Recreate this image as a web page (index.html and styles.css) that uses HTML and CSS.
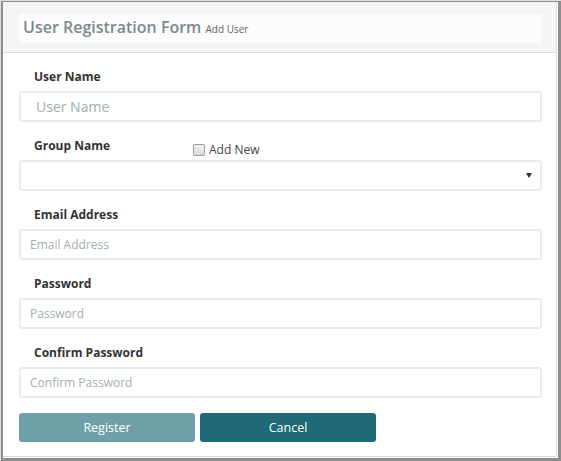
FILE: index.html
```html
<!DOCTYPE html>
<html lang="en">
<head>
<meta charset="utf-8">
<title>User Registration Form</title>
<link rel="stylesheet" href="styles.css">
</head>
<body>
<div class="frame">
  <div class="panel">
    <div class="panel-heading">
      <div class="title-box"><span class="title">User Registration Form</span> <small class="subtitle">Add User</small></div>
    </div>
    <form class="panel-body">
      <div class="group">
        <label class="lbl">User Name</label>
        <input class="field field-lg" type="text" placeholder="User Name">
      </div>
      <div class="group">
        <div class="label-row">
          <label class="lbl lbl-fixed">Group Name</label>
          <label class="check"><input class="checkbox" type="checkbox"><span>Add New</span></label>
        </div>
        <div class="select-wrap">
          <select class="field select"><option></option></select>
          <svg class="arrow" width="6" height="5" viewBox="0 0 6 5"><path d="M0 0H6L3 5Z" fill="#333"/></svg>
        </div>
      </div>
      <div class="group">
        <label class="lbl">Email Address</label>
        <input class="field" type="email" placeholder="Email Address">
      </div>
      <div class="group">
        <label class="lbl">Password</label>
        <input class="field" type="password" placeholder="Password">
      </div>
      <div class="group">
        <label class="lbl">Confirm Password</label>
        <input class="field" type="password" placeholder="Confirm Password">
      </div>
      <div class="actions">
        <button class="btn btn-register" type="button">Register</button>
        <button class="btn btn-cancel" type="button">Cancel</button>
      </div>
    </form>
  </div>
</div>
</body>
</html>
```

FILE: styles.css
```css
html, body {
  margin: 0;
  padding: 0;
}
body {
  background: #dcdcdc;
  font-family: "Open Sans", "DejaVu Sans", sans-serif;
  color: #333;
}
.frame {
  box-sizing: border-box;
  margin: 1px 0 0 1px;
  width: 560px;
  height: 460px;
  border-style: solid;
  border-color: #8e8e8e;
  border-width: 1px 3px 3px 2px;
  background: #fff;
  padding: 0 1px 1px 0;
}
.panel {
  box-sizing: border-box;
  height: 100%;
  border-right: 1px solid #dddddd;
  border-bottom: 1px solid #dddddd;
}
.panel-heading {
  background: #f4f4f4;
  border-bottom: 1px solid #dcdcdc;
  padding: 12px 14px 9px 16px;
}
.title-box {
  background: #fcfcfc;
  height: 29px;
  box-sizing: border-box;
  padding: 0 4px;
  line-height: 26px;
  white-space: nowrap;
}
.title {
  font-size: 16px;
  font-weight: 600;
  color: #7d898f;
}
.subtitle {
  font-size: 10px;
  color: #666;
}
.panel-body {
  margin: 0;
  padding: 15px 14px 0 16px;
}
.group {
  margin-bottom: 15px;
}
.lbl {
  display: block;
  padding-left: 15px;
  font-size: 12px;
  line-height: 17px;
  font-weight: 700;
  color: #333;
  margin-bottom: 6px;
}
.label-row {
  display: flex;
  height: 17px;
  margin-bottom: 6px;
}
.label-row .lbl {
  margin-bottom: 0;
}
.lbl-fixed {
  flex: 0 0 174px;
  box-sizing: border-box;
}
.check {
  display: flex;
  align-items: center;
  margin-top: 4px;
  height: 17px;
  font-size: 12px;
  line-height: 17px;
  color: #444;
}
.checkbox {
  appearance: none;
  -webkit-appearance: none;
  box-sizing: border-box;
  width: 12px;
  height: 12px;
  margin: 0 4px 0 0;
  border: 1px solid #9c9c9c;
  border-radius: 2px;
  background: linear-gradient(#f2f2f2, #d9d9d9);
}
.field {
  display: block;
  box-sizing: border-box;
  width: 100%;
  height: 31px;
  margin: 0;
  border: 2px solid #e8ecec;
  border-radius: 3px;
  background: #fff;
  padding: 0 9px;
  font-family: "Open Sans", "DejaVu Sans", sans-serif;
  font-size: 12px;
  color: #333;
  outline: none;
}
.field::placeholder {
  color: #a4adb1;
}
.field-lg {
  font-size: 14px;
  padding-left: 15px;
}
.select-wrap {
  position: relative;
}
.select {
  appearance: none;
  -webkit-appearance: none;
}
.arrow {
  position: absolute;
  right: 10px;
  top: 13px;
}
.actions {
  display: flex;
  gap: 5px;
}
.btn {
  width: 176px;
  height: 29px;
  border: none;
  border-radius: 3px;
  font-family: "Open Sans", "DejaVu Sans", sans-serif;
  font-size: 12.5px;
  color: #fff;
  padding: 0;
  cursor: pointer;
}
.btn-register {
  background: #6f9fa8;
}
.btn-cancel {
  background: #1f6a76;
}
```
